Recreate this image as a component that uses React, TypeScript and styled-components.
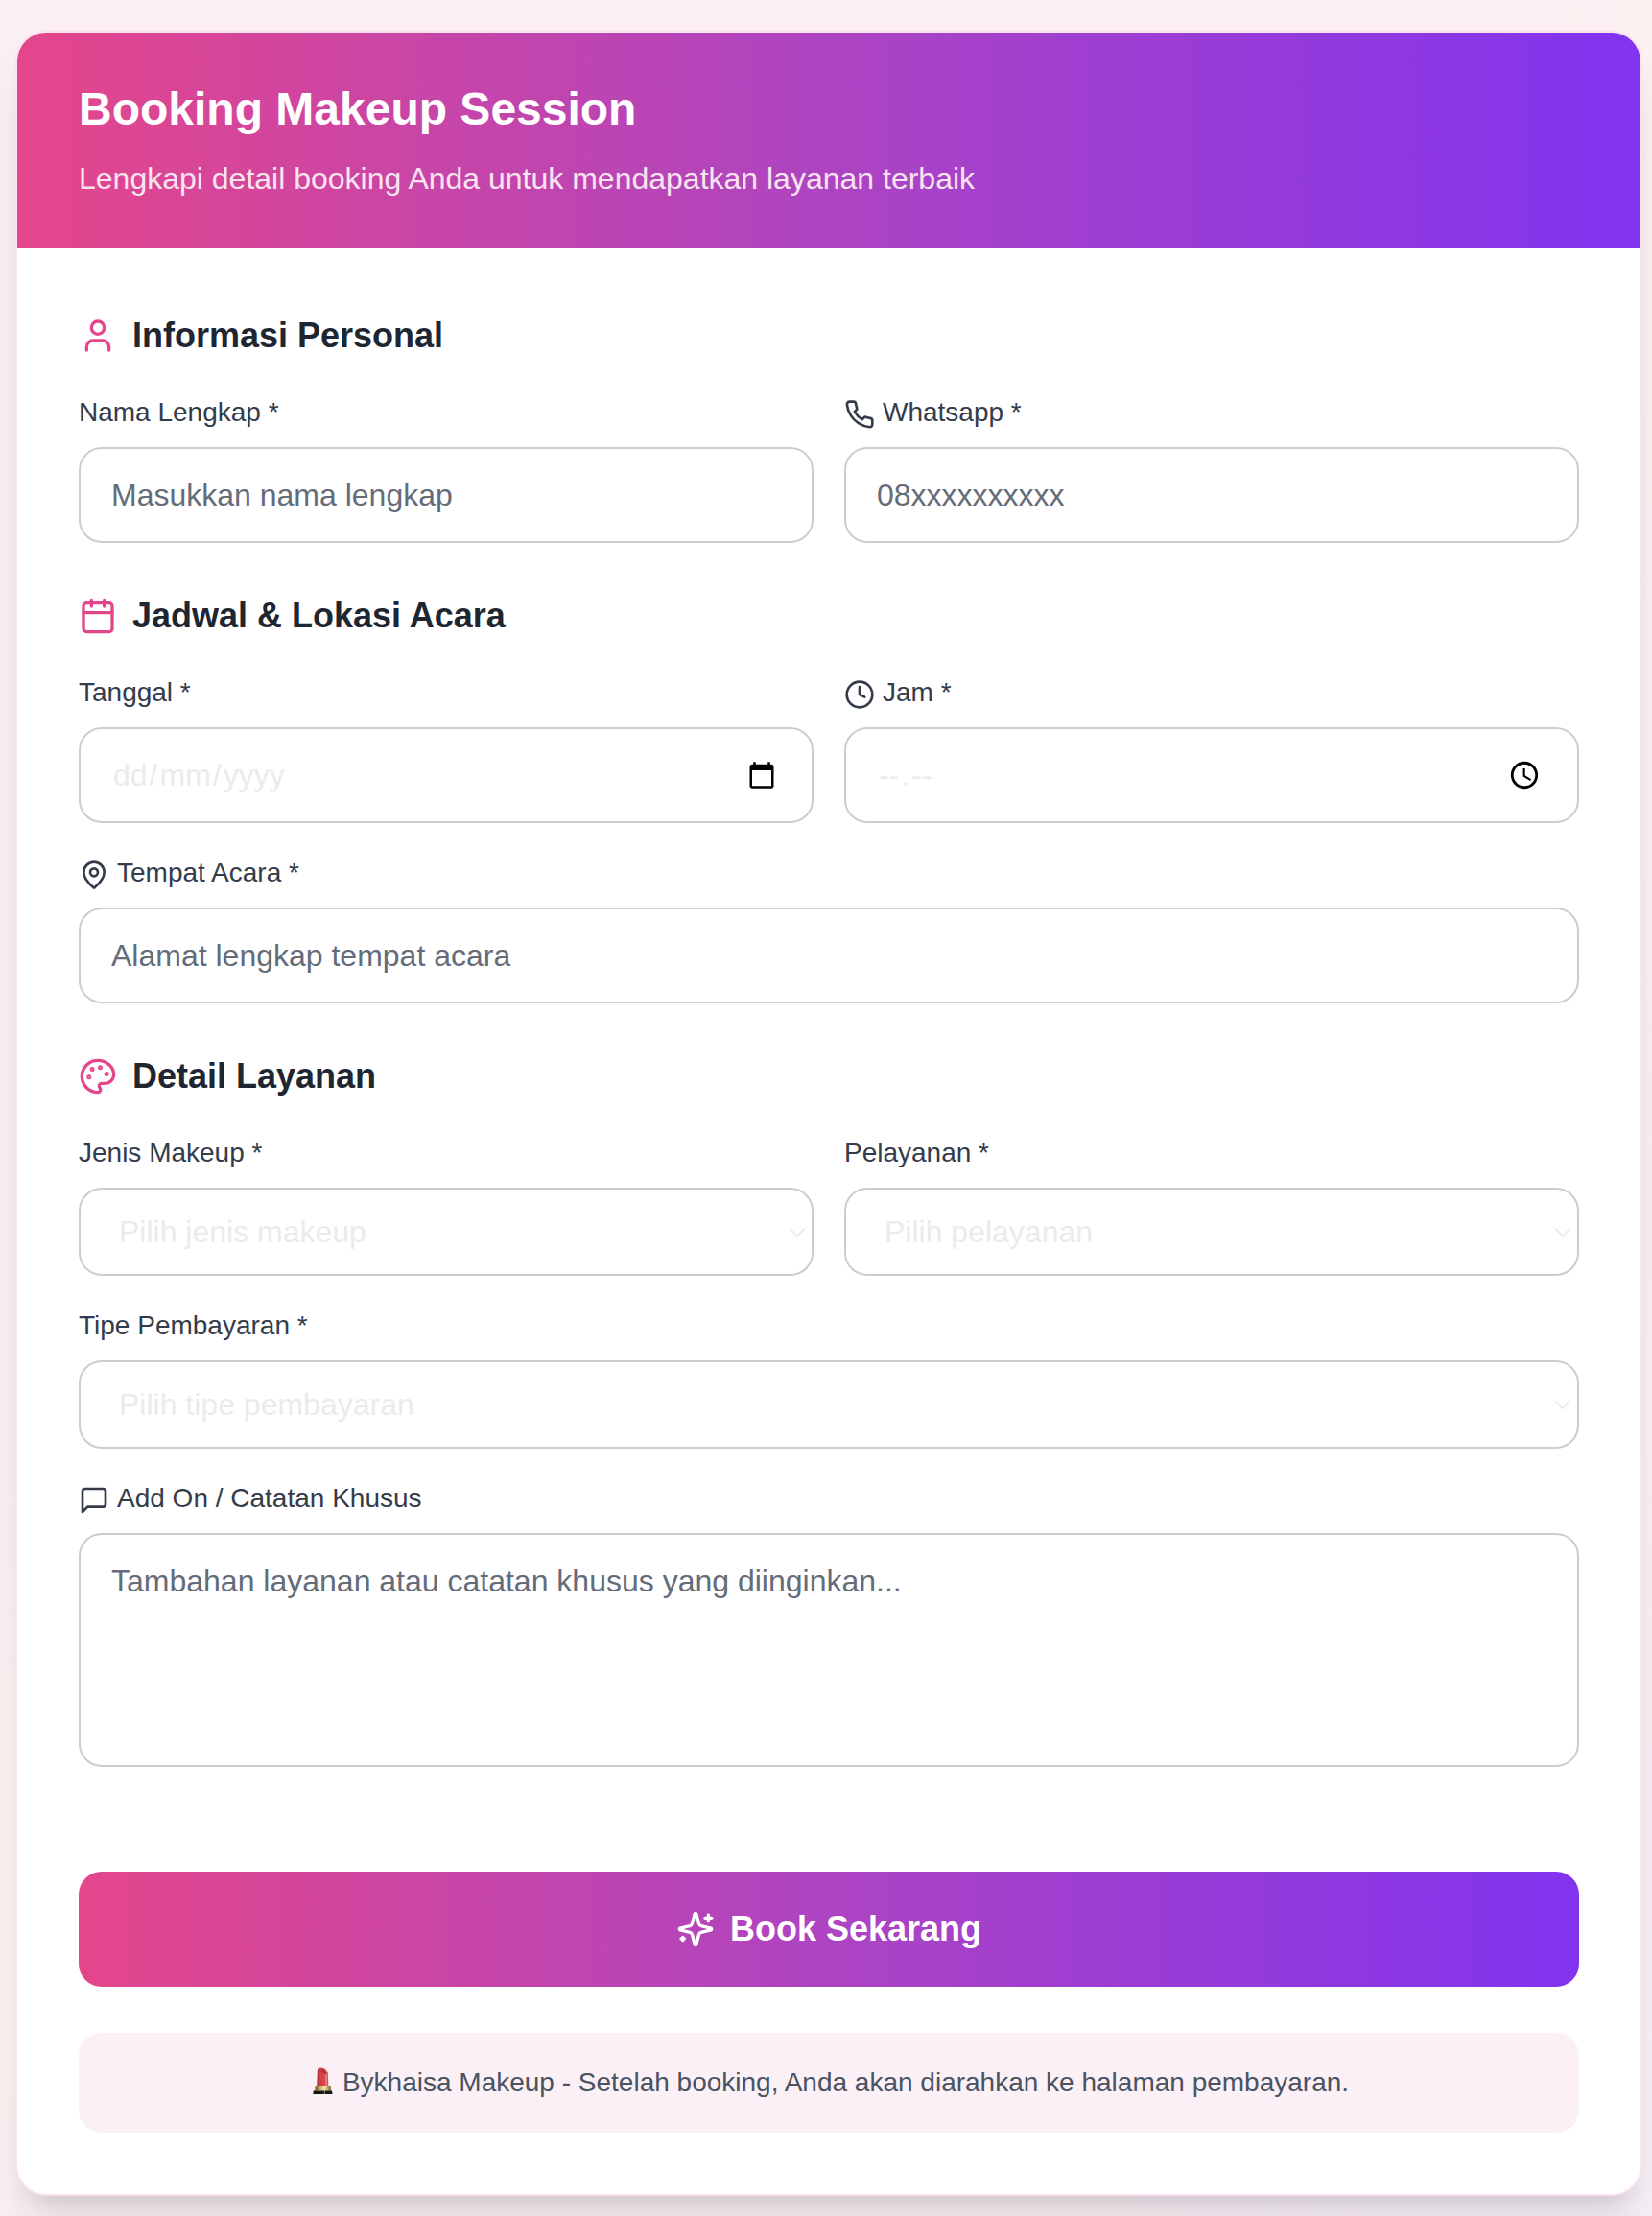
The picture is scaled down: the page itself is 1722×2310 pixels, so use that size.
import React from "react";
import styled, { createGlobalStyle, css } from "styled-components";
import { User, Calendar, Clock, MapPin } from "lucide-react";

const GlobalStyle = createGlobalStyle`
  *, *::before, *::after { box-sizing: border-box; }
  html, body { margin: 0; padding: 0; }
  body {
    font-family: "Liberation Sans", Arial, Helvetica, sans-serif;
    font-size: 32px;
    line-height: 48px;
    overflow: hidden;
  }
`;

const brandGradient = "linear-gradient(90deg, #e4468b 0%, #ad44c2 50%, #8133ef 100%)";

const Page = styled.main`
  height: 2310px;
  padding: 32px 10px 0 16px;
  background: linear-gradient(135deg, #fceff4 0%, #fcf0f1 52%, #f8f0f8 100%);
  overflow: hidden;
`;

const Card = styled.section`
  height: 2257px;
  border: 2px solid #f8e4ef;
  border-radius: 32px;
  background: #fff;
  overflow: hidden;
  box-shadow: 0 40px 50px -10px rgba(0, 0, 0, 0.1), 0 16px 20px -12px rgba(0, 0, 0, 0.1);
`;

const Header = styled.header`
  padding: 48px 64px;
  color: #fff;
  background: ${brandGradient};
`;

const Title = styled.h1`
  margin: 0 0 16px;
  font-size: 48px;
  line-height: 64px;
  font-weight: 700;
`;

const Subtitle = styled.p`
  margin: 0;
  color: #f8e4ef;
`;

const Form = styled.form`
  display: flex;
  flex-direction: column;
  padding: 64px;
`;

const Sections = styled.div`
  display: flex;
  flex-direction: column;
  gap: 48px;
`;

const Section = styled.section`
  display: flex;
  flex-direction: column;
  gap: 32px;
`;

const Heading = styled.h2`
  display: flex;
  align-items: center;
  gap: 16px;
  margin: 0;
  font-size: 36px;
  line-height: 56px;
  font-weight: 700;
  color: #1e2631;

  svg { color: #e4468b; }
`;

const Row = styled.div`
  display: grid;
  grid-template-columns: 1fr 1fr;
  gap: 32px;
`;

const Field = styled.div`
  display: flex;
  flex-direction: column;
  gap: 16px;
`;

const Label = styled.label`
  display: flex;
  align-items: center;
  gap: 8px;
  height: 40px;
  font-size: 28px;
  line-height: 40px;
  color: #343c4b;

  svg { flex: none; margin-top: 4px; }
`;

const control = css`
  display: block;
  width: 100%;
  margin: 0;
  border: 2px solid #c9cdd4;
  border-radius: 24px;
  background: #fff;
  font: inherit;
  outline: none;
`;

const Input = styled.input`
  ${control}
  height: 100px;
  padding: 24px 32px;
  color: #1e2631;
  &::placeholder { color: #656c79; opacity: 1; }
`;

const TextArea = styled.textarea`
  ${control}
  height: 244px;
  padding: 24px 32px;
  resize: none;
  &::placeholder { color: #656c79; opacity: 1; }
`;

const Picker = styled.div<{ $end: number }>`
  ${control}
  display: flex;
  align-items: center;
  height: 100px;
  padding: 0 ${(p) => p.$end}px 0 32px;
  color: #ebebeb;

  svg { margin-left: auto; fill: #000; }
`;

const Segment = styled.span`
  padding: 0 2px;
`;

const SelectBox = styled.div`
  ${control}
  display: flex;
  align-items: center;
  justify-content: space-between;
  height: 92px;
  padding: 0 5px 0 40px;
  color: #ebebeb;
`;

const Submit = styled.button`
  display: flex;
  align-items: center;
  justify-content: center;
  gap: 16px;
  height: 120px;
  margin-top: 109px;
  border: 0;
  border-radius: 24px;
  color: #fff;
  font: 700 36px/56px "Liberation Sans", Arial, sans-serif;
  background: ${brandGradient};
`;

const Notice = styled.p`
  display: flex;
  align-items: center;
  justify-content: center;
  gap: 8px;
  height: 104px;
  margin: 48px 0 0;
  border-radius: 24px;
  font-size: 28px;
  line-height: 40px;
  color: #4a5361;
  background: #fbf0f6;
`;

const LineIcon = ({ size, children }: { size: number; children: React.ReactNode }) => (
  <svg
    width={size}
    height={size}
    viewBox="0 0 24 24"
    fill="none"
    stroke="currentColor"
    strokeWidth="2"
    strokeLinecap="round"
    strokeLinejoin="round"
  >
    {children}
  </svg>
);

const PhoneIcon = () => (
  <LineIcon size={32}>
    <path d="M22 16.92v3a2 2 0 0 1-2.18 2 19.79 19.79 0 0 1-8.63-3.07 19.5 19.5 0 0 1-6-6 19.79 19.79 0 0 1-3.07-8.67A2 2 0 0 1 4.11 2h3a2 2 0 0 1 2 1.72 12.84 12.84 0 0 0 .7 2.81 2 2 0 0 1-.45 2.11L8.09 9.91a16 16 0 0 0 6 6l1.27-1.27a2 2 0 0 1 2.11-.45 12.84 12.84 0 0 0 2.81.7A2 2 0 0 1 22 16.92z" />
  </LineIcon>
);

const MessageIcon = () => (
  <LineIcon size={32}>
    <path d="M21 15a2 2 0 0 1-2 2H7l-4 4V5a2 2 0 0 1 2-2h14a2 2 0 0 1 2 2z" />
  </LineIcon>
);

const PaletteIcon = () => (
  <LineIcon size={40}>
    <circle cx="13.5" cy="6.5" r=".5" fill="currentColor" />
    <circle cx="17.5" cy="10.5" r=".5" fill="currentColor" />
    <circle cx="8.5" cy="7.5" r=".5" fill="currentColor" />
    <circle cx="6.5" cy="12.5" r=".5" fill="currentColor" />
    <path d="M12 2C6.5 2 2 6.5 2 12s4.5 10 10 10c.926 0 1.648-.746 1.648-1.688 0-.437-.18-.835-.437-1.125-.29-.289-.438-.652-.438-1.125a1.64 1.64 0 0 1 1.668-1.668h1.996c3.051 0 5.555-2.503 5.555-5.554C21.965 6.012 17.461 2 12 2z" />
  </LineIcon>
);

const SparklesIcon = () => (
  <LineIcon size={40}>
    <path d="M9.937 15.5A2 2 0 0 0 8.5 14.063l-6.135-1.582a.5.5 0 0 1 0-.962L8.5 9.936A2 2 0 0 0 9.937 8.5l1.582-6.135a.5.5 0 0 1 .963 0L14.063 8.5A2 2 0 0 0 15.5 9.937l6.135 1.581a.5.5 0 0 1 0 .964L15.5 14.063a2 2 0 0 0-1.437 1.437l-1.582 6.135a.5.5 0 0 1-.963 0z" />
    <path d="M20 3v4" />
    <path d="M22 5h-4" />
    <path d="M4 17v2" />
    <path d="M5 18H3" />
  </LineIcon>
);

const Chevron = () => (
  <svg width="20" height="20" viewBox="0 0 20 20" fill="none" stroke="currentColor" strokeWidth="1.8">
    <path d="M2.2 6.500L10 14.3L17.8 6.500" />
  </svg>
);

const CalendarGlyph = () => (
  <svg width="30" height="30" viewBox="0 0 24 24">
    <path d="M20 3h-1V1h-2v2H7V1H5v2H4c-1.1 0-2 .9-2 2v16c0 1.1.9 2 2 2h16c1.1 0 2-.9 2-2V5c0-1.1-.9-2-2-2zm0 18H4V8h16v13z" />
  </svg>
);

const ClockGlyph = () => (
  <svg width="34" height="34" viewBox="0 0 24 24">
    <path d="M11.99 2C6.47 2 2 6.48 2 12s4.47 10 9.99 10C17.52 22 22 17.52 22 12S17.52 2 11.99 2zM12 20c-4.42 0-8-3.58-8-8s3.58-8 8-8 8 3.58 8 8-3.58 8-8 8zM12.5 7H11v6l5.25 3.15.75-1.23-4.5-2.67z" />
  </svg>
);

const Lipstick = () => (
  <svg width="27" height="32" viewBox="0 0 27 32">
    <defs>
      <linearGradient id="stick" x1="0" x2="1">
        <stop offset="0" stopColor="#a93038" />
        <stop offset="0.25" stopColor="#cf3f46" />
        <stop offset="0.7" stopColor="#dc4a4e" />
        <stop offset="0.82" stopColor="#ee8f8c" />
        <stop offset="1" stopColor="#c4353d" />
      </linearGradient>
      <linearGradient id="gold" x1="0" x2="1">
        <stop offset="0" stopColor="#6f5426" />
        <stop offset="0.3" stopColor="#c9a55a" />
        <stop offset="0.6" stopColor="#f7e6ae" />
        <stop offset="1" stopColor="#7d602a" />
      </linearGradient>
    </defs>
    <path d="M8.200 19.500L8.800 3.500C9 1.200 10.200.4 12 .4c4 .2 7.600 2.600 7.900 6l.4 13.100z" fill="url(#stick)" />
    <path d="M12.300 2c3.200.2 6.200 2.200 6.800 4.800-2.700.7-6.200-1-6.800-4.800z" fill="#b5323a" />
    <path d="M6.700 19h16l.4 5.500H6.300z" fill="url(#gold)" />
    <path d="M4.700 24.500h19.400l.4 3.600H4.300z" fill="#17150f" />
    <path d="M15.800 24.500h1v3.600h-1z" fill="#8c8a85" />
  </svg>
);

export default function App() {
  return (
    <>
      <GlobalStyle />
      <Page>
        <Card>
          <Header>
            <Title>Booking Makeup Session</Title>
            <Subtitle>Lengkapi detail booking Anda untuk mendapatkan layanan terbaik</Subtitle>
          </Header>
          <Form>
            <Sections>
              <Section>
                <Heading><User size={40} />Informasi Personal</Heading>
                <Row>
                  <Field>
                    <Label>Nama Lengkap *</Label>
                    <Input placeholder="Masukkan nama lengkap" />
                  </Field>
                  <Field>
                    <Label><PhoneIcon />Whatsapp *</Label>
                    <Input placeholder="08xxxxxxxxxx" />
                  </Field>
                </Row>
              </Section>

              <Section>
                <Heading><Calendar size={40} />Jadwal &amp; Lokasi Acara</Heading>
                <Row>
                  <Field>
                    <Label>Tanggal *</Label>
                    <Picker $end={37}>
                      <Segment>dd</Segment>/<Segment>mm</Segment>/<Segment>yyyy</Segment>
                      <CalendarGlyph />
                    </Picker>
                  </Field>
                  <Field>
                    <Label><Clock size={32} />Jam *</Label>
                    <Picker $end={38}>
                      <Segment>--</Segment>.<Segment>--</Segment>
                      <ClockGlyph />
                    </Picker>
                  </Field>
                </Row>
                <Field>
                  <Label><MapPin size={32} />Tempat Acara *</Label>
                  <Input placeholder="Alamat lengkap tempat acara" />
                </Field>
              </Section>

              <Section>
                <Heading><PaletteIcon />Detail Layanan</Heading>
                <Row>
                  <Field>
                    <Label>Jenis Makeup *</Label>
                    <SelectBox>Pilih jenis makeup<Chevron /></SelectBox>
                  </Field>
                  <Field>
                    <Label>Pelayanan *</Label>
                    <SelectBox>Pilih pelayanan<Chevron /></SelectBox>
                  </Field>
                </Row>
                <Field>
                  <Label>Tipe Pembayaran *</Label>
                  <SelectBox>Pilih tipe pembayaran<Chevron /></SelectBox>
                </Field>
                <Field>
                  <Label><MessageIcon />Add On / Catatan Khusus</Label>
                  <TextArea placeholder="Tambahan layanan atau catatan khusus yang diinginkan..." />
                </Field>
              </Section>
            </Sections>

            <Submit type="button"><SparklesIcon />Book Sekarang</Submit>
            <Notice>
              <Lipstick />
              Bykhaisa Makeup - Setelah booking, Anda akan diarahkan ke halaman pembayaran.
            </Notice>
          </Form>
        </Card>
      </Page>
    </>
  );
}
